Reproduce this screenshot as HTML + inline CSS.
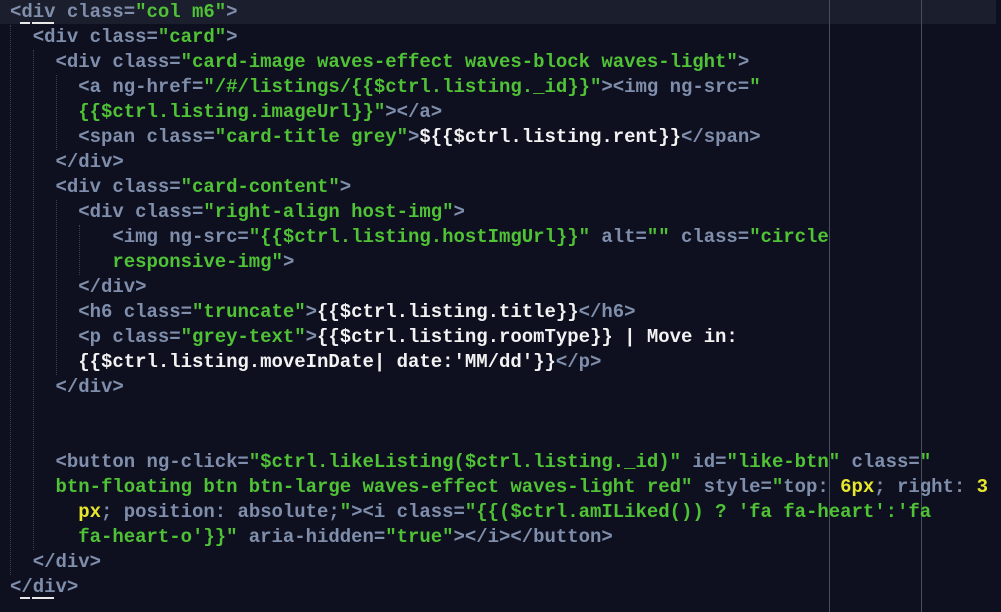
<!DOCTYPE html>
<html><head><style>
html,body{margin:0;padding:0;width:1001px;height:612px;overflow:hidden;background:#0e1020;}
.hl{position:absolute;left:0;top:0;width:996px;height:24px;background:#1b1e2c;}
.v{position:absolute;top:0;height:612px;width:1px;background:#4a4d5c;}
pre{position:absolute;left:10px;top:0;margin:0;font-family:"Liberation Mono",monospace;font-size:19px;font-weight:bold;line-height:25px;color:#7f8eab;letter-spacing:-0.03px;}
.s{color:#4fc235}.w{color:#f2f2f2}.y{color:#e6e62c}
.g{position:absolute;width:0;border-left:1px dotted #3a3e52;}
.u{position:absolute;top:22px;height:2px;background:#e8e8e8;}
</style></head><body>
<div class="hl"></div>
<div class="v" style="left:829px"></div>
<div class="v" style="left:921px"></div>
<div class="g" style="left:10px;top:25px;height:550px"></div>
<div class="g" style="left:33px;top:50px;height:500px"></div>
<div class="g" style="left:56px;top:75px;height:75px"></div>
<div class="g" style="left:56px;top:200px;height:175px"></div>
<div class="g" style="left:79px;top:225px;height:50px"></div>
<div class="u" style="left:20px;width:10px"></div><div class="u" style="left:32px;width:22px"></div>
<div class="u" style="left:20px;width:10px;top:597px"></div><div class="u" style="left:32px;width:22px;top:597px"></div>
<pre>&lt;div class=<span class="s">"col m6"</span>&gt;
  &lt;div class=<span class="s">"card"</span>&gt;
    &lt;div class=<span class="s">"card-image waves-effect waves-block waves-light"</span>&gt;
      &lt;a ng-href=<span class="s">"/#/listings/{{$ctrl.listing._id}}"</span>&gt;&lt;img ng-src=<span class="s">"</span>
<span class="s">      {{$ctrl.listing.imageUrl}}"</span>&gt;&lt;/a&gt;
      &lt;span class=<span class="s">"card-title grey"</span>&gt;<span class="w">${{$ctrl.listing.rent}}</span>&lt;/span&gt;
    &lt;/div&gt;
    &lt;div class=<span class="s">"card-content"</span>&gt;
      &lt;div class=<span class="s">"right-align host-img"</span>&gt;
         &lt;img ng-src=<span class="s">"{{$ctrl.listing.hostImgUrl}}"</span> alt=<span class="s">""</span> class=<span class="s">"circle</span>
<span class="s">         responsive-img"</span>&gt;
      &lt;/div&gt;
      &lt;h6 class=<span class="s">"truncate"</span>&gt;<span class="w">{{$ctrl.listing.title}}</span>&lt;/h6&gt;
      &lt;p class=<span class="s">"grey-text"</span>&gt;<span class="w">{{$ctrl.listing.roomType}} | Move in:</span>
<span class="w">      {{$ctrl.listing.moveInDate| date:'MM/dd'}}</span>&lt;/p&gt;
    &lt;/div&gt;


    &lt;button ng-click=<span class="s">"$ctrl.likeListing($ctrl.listing._id)"</span> id=<span class="s">"like-btn"</span> class=<span class="s">"</span>
<span class="s">    btn-floating btn btn-large waves-effect waves-light red"</span> style=<span class="s">"</span>top: <span class="y">6px</span>; right: <span class="y">3</span>
<span class="y">      px</span>; position: absolute;<span class="s">"</span>&gt;&lt;i class=<span class="s">"{{($ctrl.amILiked()) ? 'fa fa-heart':'fa</span>
<span class="s">      fa-heart-o'}}"</span> aria-hidden=<span class="s">"true"</span>&gt;&lt;/i&gt;&lt;/button&gt;
  &lt;/div&gt;
&lt;/div&gt;</pre>
</body></html>
